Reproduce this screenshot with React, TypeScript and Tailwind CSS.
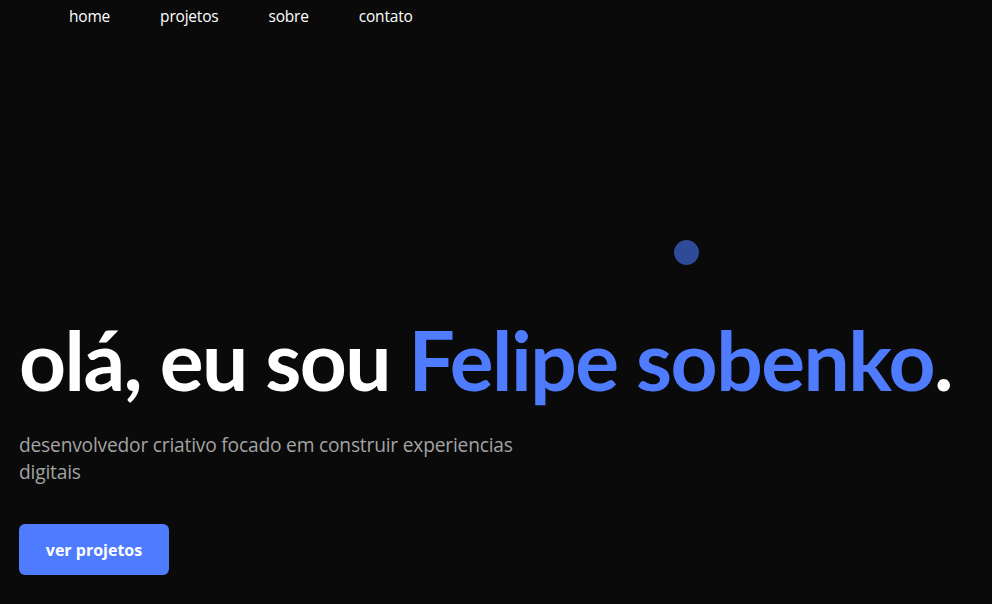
const links = ["home", "projetos", "sobre", "contato"]

export default function App() {
  return (
    <div className="relative min-h-screen overflow-hidden bg-[#0a0a0a] font-['Open_Sans',sans-serif] text-white">
      <nav className="flex gap-[50px] pl-[69px] pt-1 text-[15.5px] leading-6 tracking-[-0.2px]">
        {links.map((l) => (
          <a key={l} href="#" className="text-white">
            {l}
          </a>
        ))}
      </nav>

      {/* floating dot */}
      <div className="absolute left-[674px] top-[240px] size-[25px] rounded-full bg-[#2f4a96]" />

      <section className="px-[19px] pt-[290px]">
        <h1 className="font-['Lato',sans-serif] text-[82px] font-bold leading-none tracking-[-1.5px] whitespace-nowrap">
          olá, eu sou <span className="text-[#4f7cff]">Felipe sobenko</span>.
        </h1>
        <p className="mt-[31px] max-w-[510px] text-[19.2px] leading-[27px] tracking-[-0.2px] text-[#a3a3a3]">
          desenvolvedor criativo focado em construir experiencias digitais
        </p>
        <button className="mt-[39px] h-[51px] w-[150px] rounded-md bg-[#4f7cff] text-base font-bold text-white">
          ver projetos
        </button>
      </section>
    </div>
  )
}
